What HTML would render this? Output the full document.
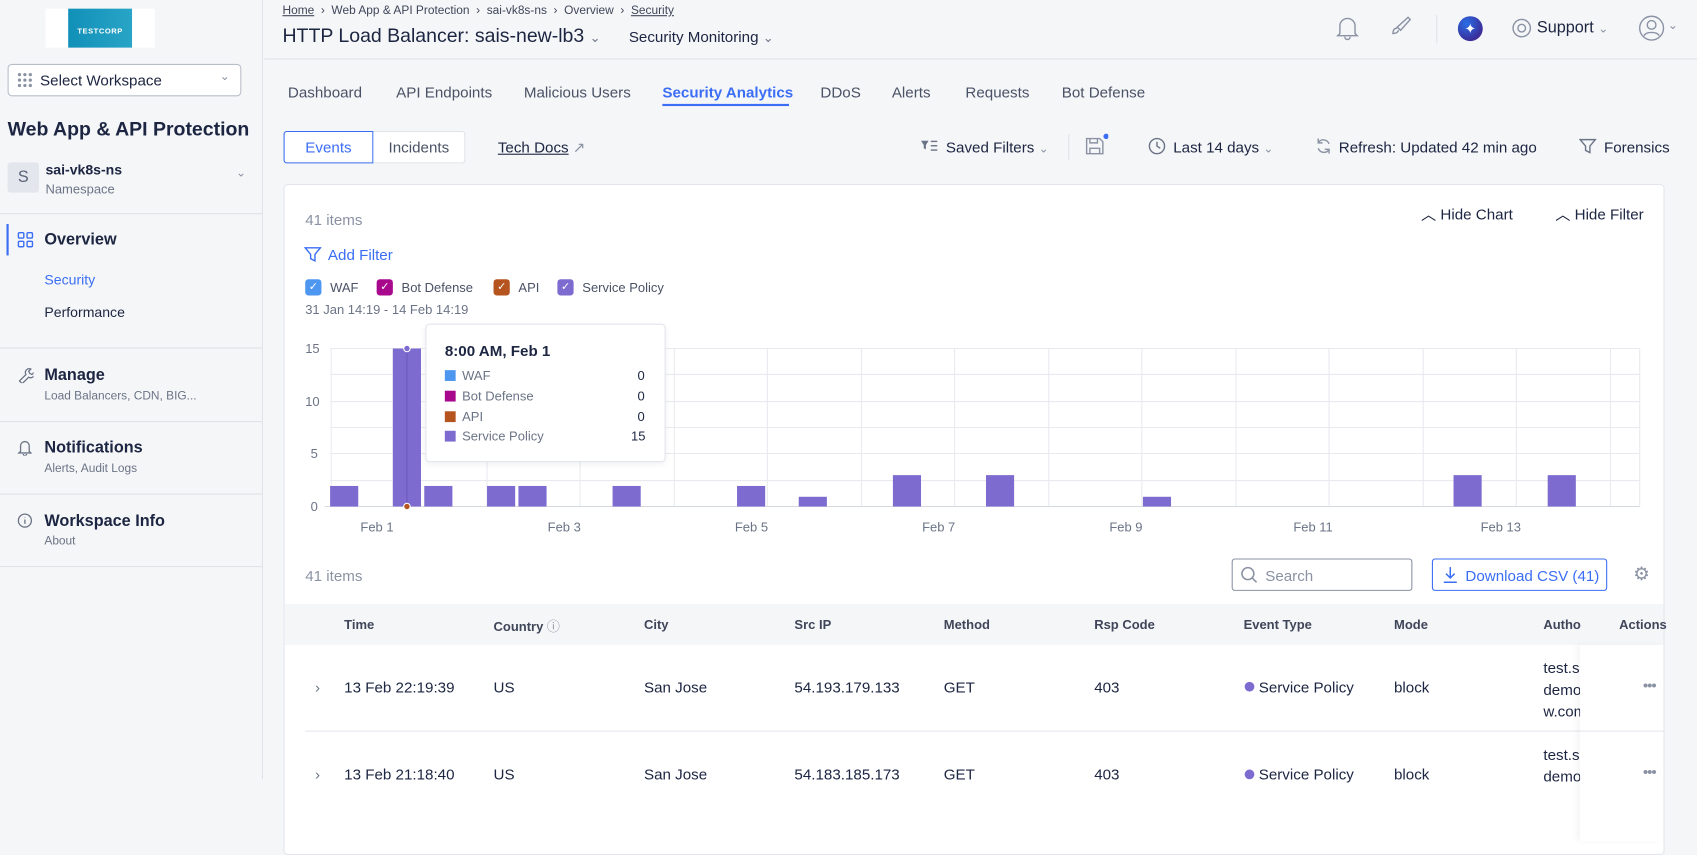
<!DOCTYPE html>
<html><head><meta charset="utf-8"><style>
*{box-sizing:border-box;margin:0;padding:0}
html,body{width:1697px;height:777px;overflow:hidden;background:#f5f6f8}
body{font-family:"Liberation Sans",sans-serif;color:#1c2541;font-size:14px}
#w{position:absolute;left:0;top:0;width:1568px;height:718px;transform:scale(1.0823);transform-origin:0 0}
.a{position:absolute;white-space:nowrap}
.side{position:absolute;left:0;top:0;width:243px;height:720px;background:#f5f6f8;border-right:1px solid #dfe2e8}
.hr{position:absolute;left:0;width:243px;height:1px;background:#dfe2e8}
.g{color:#6b7486;font-size:11px}
.tab{font-size:14px;color:#4a5265}
.th{font-size:12px;font-weight:bold;color:#3f4659}
.td{font-size:14px;color:#1c2541}
</style></head><body><div id="w">
<div class="side">
 <div class="a" style="left:42px;top:8px;width:101px;height:36px;background:#fff"></div>
 <div class="a" style="left:63px;top:8px;width:59px;height:36px;background:linear-gradient(90deg,#1190b8,#28a4c6);color:#fff;font-size:7px;font-weight:bold;text-align:center;line-height:44px;letter-spacing:.5px">TESTCORP</div>
 <div class="a" style="left:7px;top:59px;width:216px;height:30px;border:1px solid #b8bec9;border-radius:4px;background:#fff"></div>
 <svg class="a" style="left:16px;top:67px" width="14" height="14"><g fill="#8a92a3"><circle cx="2" cy="2" r="1.5"/><circle cx="7" cy="2" r="1.5"/><circle cx="12" cy="2" r="1.5"/><circle cx="2" cy="7" r="1.5"/><circle cx="7" cy="7" r="1.5"/><circle cx="12" cy="7" r="1.5"/><circle cx="2" cy="12" r="1.5"/><circle cx="7" cy="12" r="1.5"/><circle cx="12" cy="12" r="1.5"/></g></svg>
 <div class="a" style="left:37px;top:66px;font-size:14px">Select Workspace</div>
 <div class="a" style="left:203px;top:64px;color:#8a92a3;font-size:11px">⌄</div>
 <div class="a" style="left:7px;top:109px;font-size:18px;font-weight:bold">Web App &amp; API Protection</div>
 <div class="a" style="left:7px;top:150px;width:29px;height:28px;background:#e3e6ed;border-radius:3px;color:#5b6376;text-align:center;line-height:28px;font-size:15px">S</div>
 <div class="a" style="left:42px;top:149px;font-size:13px;font-weight:bold">sai-vk8s-ns</div>
 <div class="a g" style="left:42px;top:168px;font-size:12px">Namespace</div>
 <div class="a" style="left:218px;top:153px;color:#8a92a3;font-size:11px">⌄</div>
 <div class="hr" style="top:197px"></div>
 <div class="a" style="left:6px;top:207px;width:2px;height:29px;background:#3b6ef5"></div>
 <svg class="a" style="left:16px;top:214px" width="15" height="15" fill="none" stroke="#3b6ef5" stroke-width="1.3"><rect x="1" y="1" width="5" height="5" rx="1"/><rect x="9" y="1" width="5" height="5" rx="1"/><rect x="1" y="9" width="5" height="5" rx="1"/><rect x="9" y="9" width="5" height="5" rx="1"/></svg>
 <div class="a" style="left:41px;top:213px;font-size:15px;font-weight:bold">Overview</div>
 <div class="a" style="left:41px;top:251px;font-size:13px;color:#3b6ef5">Security</div>
 <div class="a" style="left:41px;top:281px;font-size:13px">Performance</div>
 <div class="hr" style="top:321px"></div>
 <svg class="a" style="left:16px;top:339px" width="15" height="15" fill="none" stroke="#6b7486" stroke-width="1.2"><path d="M2 13l6-6a3.5 3.5 0 0 1 4.5-5l-2 2 1 2 2 1 2-2a3.5 3.5 0 0 1-5 4.5l-6 6z"/></svg>
 <div class="a" style="left:41px;top:338px;font-size:15px;font-weight:bold">Manage</div>
 <div class="a g" style="left:41px;top:360px">Load Balancers, CDN, BIG...</div>
 <div class="hr" style="top:389px"></div>
 <svg class="a" style="left:16px;top:406px" width="14" height="15" fill="none" stroke="#6b7486" stroke-width="1.2"><path d="M3 11V6a4 4 0 0 1 8 0v5l1.5 1.5h-11z M5.5 13.5a1.5 1.5 0 0 0 3 0"/></svg>
 <div class="a" style="left:41px;top:405px;font-size:15px;font-weight:bold">Notifications</div>
 <div class="a g" style="left:41px;top:427px">Alerts, Audit Logs</div>
 <div class="hr" style="top:456px"></div>
 <svg class="a" style="left:16px;top:474px" width="14" height="14" fill="none" stroke="#6b7486" stroke-width="1.2"><circle cx="7" cy="7" r="6"/><path d="M7 6v4M7 4v.5"/></svg>
 <div class="a" style="left:41px;top:473px;font-size:15px;font-weight:bold">Workspace Info</div>
 <div class="a g" style="left:41px;top:494px">About</div>
 <div class="hr" style="top:523px"></div>
</div>
<div class="a" style="left:244px;top:54px;width:1330px;height:1px;background:#dfe2e8"></div>
<div class="a" style="left:261px;top:4px;font-size:11px;color:#3f4659"><u>Home</u> &nbsp;›&nbsp; Web App &amp; API Protection &nbsp;›&nbsp; sai-vk8s-ns &nbsp;›&nbsp; Overview &nbsp;›&nbsp; <u>Security</u></div>
<div class="a" style="left:261px;top:23px;font-size:18px">HTTP Load Balancer: sais-new-lb3 <span style="font-size:12px;color:#6b7486">⌄</span></div>
<div class="a" style="left:581px;top:26px;font-size:14px">Security Monitoring <span style="font-size:12px;color:#6b7486">⌄</span></div>
<svg class="a" style="left:1234px;top:14px" width="22" height="24" fill="none" stroke="#8a92a3" stroke-width="1.3"><path d="M4 17V10a7 7 0 0 1 14 0v7l2 2H2z M8.5 20a2.5 2.5 0 0 0 5 0"/></svg>
<svg class="a" style="left:1283px;top:14px" width="22" height="22" fill="none" stroke="#8a92a3" stroke-width="1.3"><path d="M18 2l2 2-9 10-3-3z M8 12c-3 0-4 2-4 5 2 0 5-1 5-3"/></svg>
<div class="a" style="left:1327px;top:14px;width:1px;height:26px;background:#dfe2e8"></div>
<div class="a" style="left:1347px;top:15px;width:23px;height:23px;border-radius:50%;background:radial-gradient(circle at 35% 30%,#2a6ee8,#3a2e9a 70%,#6a2a8a);color:#fff;text-align:center;line-height:23px;font-size:13px">✦</div>
<svg class="a" style="left:1396px;top:16px" width="20" height="20" fill="none" stroke="#8a92a3" stroke-width="1.3"><circle cx="10" cy="10" r="8"/><circle cx="10" cy="10" r="3.5"/></svg>
<div class="a" style="left:1420px;top:17px;font-size:15px">Support <span style="font-size:11px;color:#8a92a3">⌄</span></div>
<svg class="a" style="left:1514px;top:14px" width="24" height="24" fill="none" stroke="#8a92a3" stroke-width="1.3"><circle cx="12" cy="12" r="11"/><circle cx="12" cy="9" r="4"/><path d="M5 19c2-4 12-4 14 0"/></svg>
<div class="a" style="left:1541px;top:17px;font-size:11px;color:#8a92a3">⌄</div>
<div class="a tab" style="left:266px;top:77px">Dashboard</div>
<div class="a tab" style="left:366px;top:77px">API Endpoints</div>
<div class="a tab" style="left:484px;top:77px">Malicious Users</div>
<div class="a tab" style="left:612px;top:77px;color:#3b6ef5;font-weight:bold">Security Analytics</div>
<div class="a" style="left:612px;top:96px;width:117px;height:2px;background:#3b6ef5"></div>
<div class="a tab" style="left:758px;top:77px">DDoS</div>
<div class="a tab" style="left:824px;top:77px">Alerts</div>
<div class="a tab" style="left:892px;top:77px">Requests</div>
<div class="a tab" style="left:981px;top:77px">Bot Defense</div>
<div class="a" style="left:262px;top:121px;width:83px;height:30px;border:1px solid #3b6ef5;border-radius:3px 0 0 3px;background:#fff;color:#3b6ef5;text-align:center;line-height:28px">Events</div>
<div class="a" style="left:345px;top:121px;width:85px;height:30px;border:1px solid #dfe2e8;border-left:none;border-radius:0 3px 3px 0;background:#fff;color:#4a5265;text-align:center;line-height:28px">Incidents</div>
<div class="a" style="left:460px;top:128px"><u>Tech Docs</u> <span style="color:#8a92a3">↗</span></div>
<svg class="a" style="left:851px;top:129px" width="16" height="12" fill="#6b7486"><path d="M0 1h7L4.5 5v4L2.5 8V5z"/><rect x="9" y="1" width="6" height="1.3"/><rect x="9" y="5" width="6" height="1.3"/><rect x="9" y="9" width="6" height="1.3"/></svg>
<div class="a" style="left:874px;top:128px">Saved Filters <span style="font-size:11px;color:#8a92a3">⌄</span></div>
<div class="a" style="left:987px;top:124px;width:1px;height:24px;background:#dfe2e8"></div>
<svg class="a" style="left:1002px;top:123px" width="22" height="22" fill="none" stroke="#8a92a3" stroke-width="1.3"><path d="M2 5h12l3 3v11H2z M5 5v4h7V5 M5 19v-5h9v5"/><circle cx="20" cy="3" r="2.5" fill="#3b6ef5" stroke="none"/></svg>
<svg class="a" style="left:1061px;top:127px" width="16" height="16" fill="none" stroke="#6b7486" stroke-width="1.3"><circle cx="8" cy="8" r="7"/><path d="M8 4v4l3 2"/></svg>
<div class="a" style="left:1084px;top:128px">Last 14 days <span style="font-size:11px;color:#8a92a3">⌄</span></div>
<svg class="a" style="left:1215px;top:127px" width="16" height="16" fill="none" stroke="#8a92a3" stroke-width="1.3"><path d="M13 6a5.5 5.5 0 0 0-10-1M3 10a5.5 5.5 0 0 0 10 1M3 1v4h4M13 15v-4H9"/></svg>
<div class="a" style="left:1237px;top:128px">Refresh: Updated 42 min ago</div>
<svg class="a" style="left:1459px;top:127px" width="16" height="16" fill="none" stroke="#6b7486" stroke-width="1.3"><path d="M1 2h14l-5 6v6l-4-2V8z"/></svg>
<div class="a" style="left:1482px;top:128px">Forensics</div>
<div class="a" style="left:262px;top:170px;width:1276px;height:620px;background:#fff;border:1px solid #e3e6ed;border-radius:4px"></div>
<div class="a" style="left:282px;top:195px;color:#8a92a3">41 items</div>
<div class="a" style="left:1313px;top:188px">︿ Hide Chart</div>
<div class="a" style="left:1437px;top:188px">︿ Hide Filter</div>
<svg class="a" style="left:281px;top:227px" width="16" height="16" fill="none" stroke="#3b6ef5" stroke-width="1.3"><path d="M1 2h14l-5 6v6l-4-2V8z"/></svg>
<div class="a" style="left:303px;top:227px;color:#3b6ef5">Add Filter</div>
<div class="a" style="left:282px;top:258px;width:15px;height:15px;border-radius:3px;background:#4d97f0;color:#fff;font-size:10px;text-align:center;line-height:15px">✓</div>
<div class="a" style="left:305px;top:259px;font-size:12px;color:#4a5265">WAF</div>
<div class="a" style="left:348px;top:258px;width:15px;height:15px;border-radius:3px;background:#a8098c;color:#fff;font-size:10px;text-align:center;line-height:15px">✓</div>
<div class="a" style="left:371px;top:259px;font-size:12px;color:#4a5265">Bot Defense</div>
<div class="a" style="left:456px;top:258px;width:15px;height:15px;border-radius:3px;background:#b5541e;color:#fff;font-size:10px;text-align:center;line-height:15px">✓</div>
<div class="a" style="left:479px;top:259px;font-size:12px;color:#4a5265">API</div>
<div class="a" style="left:515px;top:258px;width:15px;height:15px;border-radius:3px;background:#7e6bd0;color:#fff;font-size:10px;text-align:center;line-height:15px">✓</div>
<div class="a" style="left:538px;top:259px;font-size:12px;color:#4a5265">Service Policy</div>
<div class="a" style="left:282px;top:279px;font-size:12px;color:#6b7486">31 Jan 14:19 - 14 Feb 14:19</div>
<svg class="a" style="left:270px;top:300px" width="1260" height="200" font-family="Liberation Sans" font-size="12" fill="#6b7486">
<g stroke="#e8eaef" stroke-width="1">
<line x1="35" y1="22" x2="1245" y2="22"/><line x1="35" y1="46" x2="1245" y2="46"/><line x1="35" y1="71" x2="1245" y2="71"/><line x1="35" y1="95" x2="1245" y2="95"/><line x1="35" y1="119" x2="1245" y2="119"/><line x1="35" y1="144" x2="1245" y2="144"/>
<line x1="36" y1="22" x2="36" y2="168"/><line x1="93" y1="22" x2="93" y2="168"/><line x1="180" y1="22" x2="180" y2="168"/><line x1="266" y1="22" x2="266" y2="168"/><line x1="353" y1="22" x2="353" y2="168"/><line x1="439" y1="22" x2="439" y2="168"/><line x1="526" y1="22" x2="526" y2="168"/><line x1="612" y1="22" x2="612" y2="168"/><line x1="699" y1="22" x2="699" y2="168"/><line x1="785" y1="22" x2="785" y2="168"/><line x1="872" y1="22" x2="872" y2="168"/><line x1="958" y1="22" x2="958" y2="168"/><line x1="1045" y1="22" x2="1045" y2="168"/><line x1="1131" y1="22" x2="1131" y2="168"/><line x1="1218" y1="22" x2="1218" y2="168"/><line x1="1245" y1="22" x2="1245" y2="168"/>
<line x1="30" y1="168" x2="1245" y2="168" stroke="#d5d9e0"/>
</g>
<text x="12" y="26">15</text><text x="12" y="75">10</text><text x="17" y="123">5</text><text x="17" y="172">0</text>
<g fill="#7e6bd0">
<rect x="35" y="149" width="26" height="19"/><rect x="93" y="22" width="26" height="146"/><rect x="122" y="149" width="26" height="19"/><rect x="180" y="149" width="26" height="19"/><rect x="209" y="149" width="26" height="19"/><rect x="296" y="149" width="26" height="19"/><rect x="411" y="149" width="26" height="19"/><rect x="468" y="159" width="26" height="9"/><rect x="555" y="139" width="26" height="29"/><rect x="641" y="139" width="26" height="29"/><rect x="786" y="159" width="26" height="9"/><rect x="1073" y="139" width="26" height="29"/><rect x="1160" y="139" width="26" height="29"/>
</g>
<line x1="106" y1="22" x2="106" y2="168" stroke="#6a5ab8"/>
<circle cx="106" cy="22" r="3" fill="#7e6bd0" stroke="#fff"/><circle cx="106" cy="168" r="3" fill="#b5541e" stroke="#fff"/>
<text x="63" y="191">Feb 1</text><text x="236" y="191">Feb 3</text><text x="409" y="191">Feb 5</text><text x="582" y="191">Feb 7</text><text x="755" y="191">Feb 9</text><text x="925" y="191">Feb 11</text><text x="1098" y="191">Feb 13</text>
</svg>
<div class="a" style="left:393px;top:299px;width:222px;height:128px;background:#fff;border:1px solid #e3e6ed;border-radius:4px;box-shadow:0 2px 6px rgba(0,0,0,.06)"></div>
<div class="a" style="left:411px;top:316px;font-size:14px;font-weight:bold">8:00 AM, Feb 1</div>
<div class="a" style="left:411px;top:342px;width:10px;height:10px;background:#4d97f0"></div><div class="a" style="left:427px;top:340px;font-size:12px;color:#6b7486">WAF</div><div class="a" style="left:589px;top:340px;font-size:12px">0</div>
<div class="a" style="left:411px;top:361px;width:10px;height:10px;background:#a8098c"></div><div class="a" style="left:427px;top:359px;font-size:12px;color:#6b7486">Bot Defense</div><div class="a" style="left:589px;top:359px;font-size:12px">0</div>
<div class="a" style="left:411px;top:380px;width:10px;height:10px;background:#b5541e"></div><div class="a" style="left:427px;top:378px;font-size:12px;color:#6b7486">API</div><div class="a" style="left:589px;top:378px;font-size:12px">0</div>
<div class="a" style="left:411px;top:398px;width:10px;height:10px;background:#7e6bd0"></div><div class="a" style="left:427px;top:396px;font-size:12px;color:#6b7486">Service Policy</div><div class="a" style="left:583px;top:396px;font-size:12px">15</div>
<div class="a" style="left:282px;top:524px;color:#8a92a3">41 items</div>
<div class="a" style="left:1138px;top:516px;width:167px;height:30px;border:1px solid #8a92a3;border-radius:3px;background:#fff"></div>
<svg class="a" style="left:1146px;top:523px" width="16" height="16" fill="none" stroke="#8a92a3" stroke-width="1.4"><circle cx="7" cy="7" r="5.5"/><path d="M11 11l4 4"/></svg>
<div class="a" style="left:1169px;top:524px;color:#8a92a3">Search</div>
<div class="a" style="left:1323px;top:516px;width:162px;height:30px;border:1px solid #3b6ef5;border-radius:3px;background:#fff"></div>
<svg class="a" style="left:1332px;top:523px" width="16" height="16" fill="none" stroke="#3b6ef5" stroke-width="1.4"><path d="M8 1v10M4 7l4 4 4-4M2 15h12"/></svg>
<div class="a" style="left:1354px;top:524px;color:#3b6ef5">Download CSV (41)</div>
<div class="a" style="left:1509px;top:521px;color:#8a92a3;font-size:17px">⚙</div>
<div class="a" style="left:263px;top:558px;width:1274px;height:38px;background:#f5f6f8"></div>
<div class="a th" style="left:318px;top:570px">Time</div>
<div class="a th" style="left:456px;top:570px">Country <span style="color:#8a92a3;font-weight:normal">ⓘ</span></div>
<div class="a th" style="left:595px;top:570px">City</div>
<div class="a th" style="left:734px;top:570px">Src IP</div>
<div class="a th" style="left:872px;top:570px">Method</div>
<div class="a th" style="left:1011px;top:570px">Rsp Code</div>
<div class="a th" style="left:1149px;top:570px">Event Type</div>
<div class="a th" style="left:1288px;top:570px">Mode</div>
<div class="a th" style="left:1426px;top:570px">Autho</div>
<div class="a th" style="left:1496px;top:570px">Actions</div>
<div class="a" style="left:282px;top:675px;width:1255px;height:1px;background:#e3e6ed"></div>
<div class="a td" style="left:291px;top:627px;color:#6b7486">›</div>
<div class="a td" style="left:318px;top:627px">13 Feb 22:19:39</div>
<div class="a td" style="left:456px;top:627px">US</div>
<div class="a td" style="left:595px;top:627px">San Jose</div>
<div class="a td" style="left:734px;top:627px">54.193.179.133</div>
<div class="a td" style="left:872px;top:627px">GET</div>
<div class="a td" style="left:1011px;top:627px">403</div>
<div class="a" style="left:1150px;top:630px;width:9px;height:9px;border-radius:50%;background:#7e6bd0"></div>
<div class="a td" style="left:1163px;top:627px">Service Policy</div>
<div class="a td" style="left:1288px;top:627px">block</div>
<div class="a td" style="left:1426px;top:607px;line-height:20px;width:34px;overflow:hidden">test.s<br>demo<br>w.com</div>
<div class="a td" style="left:291px;top:707px;color:#6b7486">›</div>
<div class="a td" style="left:318px;top:707px">13 Feb 21:18:40</div>
<div class="a td" style="left:456px;top:707px">US</div>
<div class="a td" style="left:595px;top:707px">San Jose</div>
<div class="a td" style="left:734px;top:707px">54.183.185.173</div>
<div class="a td" style="left:872px;top:707px">GET</div>
<div class="a td" style="left:1011px;top:707px">403</div>
<div class="a" style="left:1150px;top:711px;width:9px;height:9px;border-radius:50%;background:#7e6bd0"></div>
<div class="a td" style="left:1163px;top:707px">Service Policy</div>
<div class="a td" style="left:1288px;top:707px">block</div>
<div class="a td" style="left:1426px;top:687px;line-height:20px;width:34px;overflow:hidden">test.s<br>demo</div>
<div class="a" style="left:1460px;top:596px;width:77px;height:181px;background:#fff;box-shadow:-4px 0 6px rgba(0,0,0,.04)"></div>
<div class="a" style="left:1460px;top:675px;width:77px;height:1px;background:#e3e6ed"></div>
<div class="a" style="left:1518px;top:625px;color:#8a92a3;font-size:14px;letter-spacing:-1px">•••</div>
<div class="a" style="left:1518px;top:705px;color:#8a92a3;font-size:14px;letter-spacing:-1px">•••</div>
</div></body></html>
